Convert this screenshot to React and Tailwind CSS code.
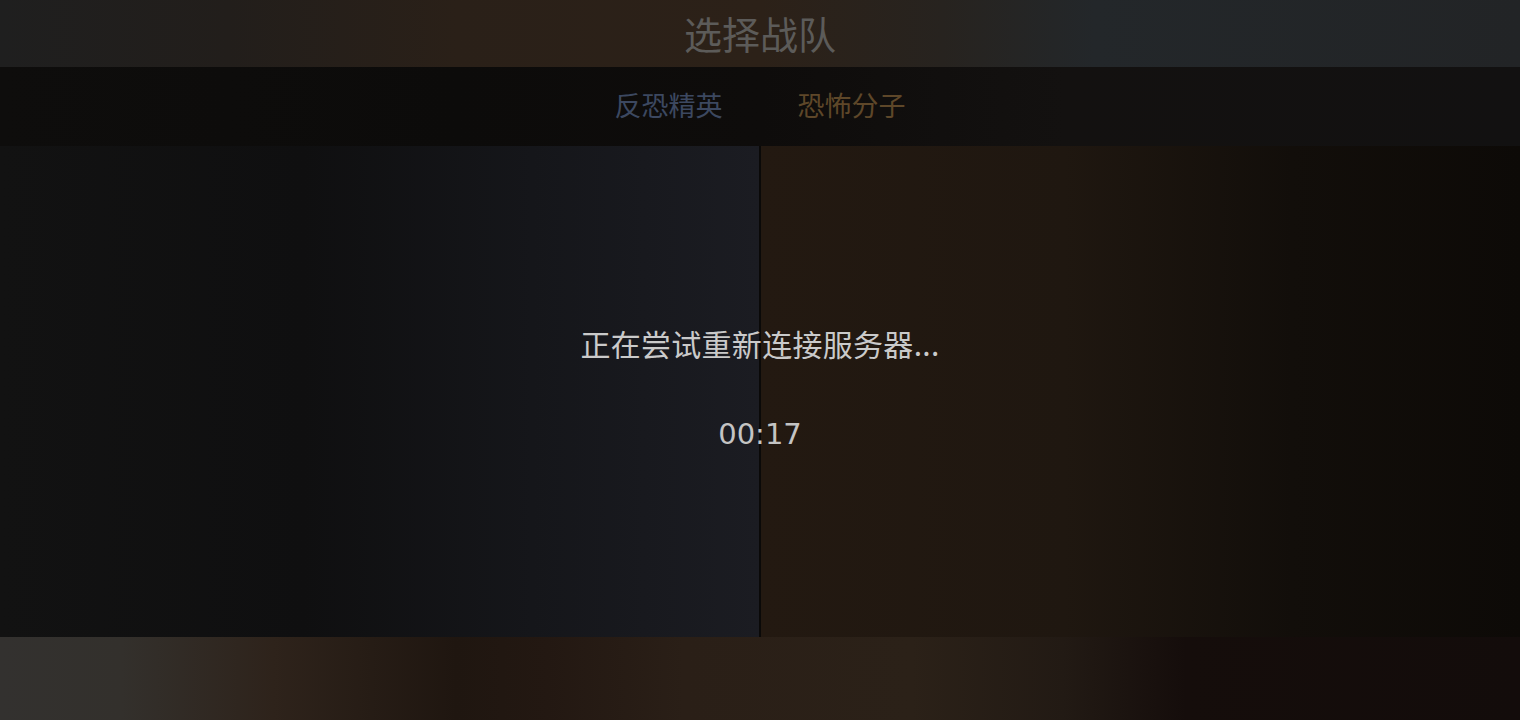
import React from "react";

const cjk = { fontFamily: '"Noto Sans CJK SC", "Noto Sans", sans-serif' };

export default function App() {
  return (
    <div className="w-[1520px] h-[720px] flex flex-col bg-[#0e0d0c] overflow-hidden" style={cjk}>
      {/* title bar */}
      <div className="h-[67px] flex items-center justify-center bg-[linear-gradient(90deg,#1f1f1f_0%,#221e1b_15%,#2a2018_30%,#2c2118_50%,#27231f_62%,#23272a_72%,#222426_100%)]">
        <h1 className="text-[38px] leading-none text-[#5c5b59] pb-[2px]">选择战队</h1>
      </div>

      {/* tabs */}
      <div className="h-[79px] flex items-center justify-center gap-[75px] pb-[4px] bg-[linear-gradient(90deg,#0e0d0c_0%,#0c0b0a_30%,#0e0c0b_50%,#131110_70%,#121111_100%)]">
        <span className="text-[27px] leading-none text-[#3c4860]">反恐精英</span>
        <span className="text-[27px] leading-none text-[#5e4729]">恐怖分子</span>
      </div>

      {/* team panels */}
      <div className="relative h-[491px] flex">
        <div className="w-[759px] bg-[linear-gradient(90deg,#121212_0%,#0f0f10_40%,#15161a_70%,#1b1c22_100%)]" />
        <div className="w-[2px] bg-[#0a0908]" />
        <div className="flex-1 bg-[linear-gradient(90deg,#231911_0%,#1f1710_40%,#120e0a_70%,#0d0a07_100%)]" />

        <div className="absolute inset-0 flex flex-col items-center justify-center gap-[51px] pb-[7px]">
          <p className="text-[30px] leading-10 text-[#cacaca] tracking-[0.3px]">正在尝试重新连接服务器...</p>
          <p className="text-[29px] leading-10 text-[#c4c4c4]" style={{ fontFamily: '"DejaVu Sans", sans-serif' }}>00:17</p>
        </div>
      </div>

      {/* footer */}
      <div className="flex-1 bg-[linear-gradient(90deg,#33312f_0%,#33302c_8%,#2e231b_18%,#1f1610_30%,#231812_36%,#2a1f17_45%,#2b2118_60%,#221a14_70%,#150d0b_78%,#130c0b_100%)]" />
    </div>
  );
}
